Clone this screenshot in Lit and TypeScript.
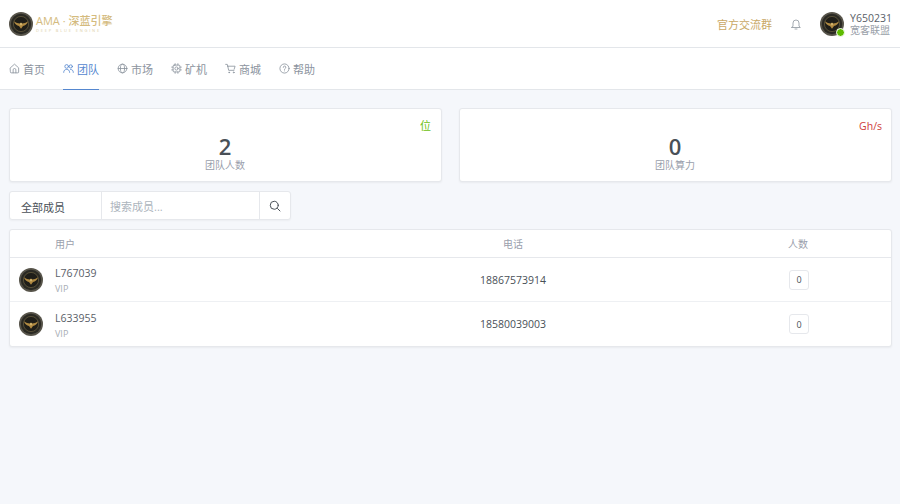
import { LitElement, html, css, svg } from "lit";
import { customElement } from "lit/decorators.js";

const avatar = (size: number) => html`<svg width=${size} height=${size} viewBox="0 0 24 24" style="display:block">
  <circle cx="12" cy="12" r="12" fill="#57544a"/>
  <circle cx="12" cy="12" r="10.200" fill="#2b2a24"/>
  <circle cx="12" cy="12" r="7.600" fill="#1f1e19" stroke="#6b6242" stroke-width=".7"/>
  <path d="M5 9.200C7 10.800 9 11.200 10.700 11.500L12 10.600l1.300.9C15 11.200 17 10.800 19 9.200 18.400 12 16 13.700 14 14.100L12 16.800 10 14.100C8 13.700 5.600 12 5 9.200Z" fill="#b08a42"/>
  <path d="M11 11.400h2l-1 2.400Z" fill="#efd995"/>
</svg>`;

const ico = (p: unknown) => html`<svg class="ico" viewBox="0 0 24 24" fill="none" stroke="currentColor" stroke-width="1.800" stroke-linecap="round" stroke-linejoin="round">${p}</svg>`;
const icons = {
  home: svg`<path d="M3 10.500 12 2.500l9 8V20a1.500 1.500 0 0 1-1.500 1.500h-15A1.500 1.500 0 0 1 3 20Z"/><path d="M9 21.500V15a3 3 0 0 1 6 0v6.500"/>`,
  team: svg`<circle cx="8" cy="7.500" r="4"/><circle cx="17" cy="7.500" r="3.500"/><path d="M1.500 20.500c0-4.500 2.800-6.500 6.500-6.500s6.500 2 6.500 6.500"/><path d="M16.500 14c3.500 0 6 2.200 6 6.500"/>`,
  globe: svg`<circle cx="12" cy="12" r="9.500"/><ellipse cx="12" cy="12" rx="4.500" ry="9.500"/><path d="M2.500 12h19"/>`,
  chip: svg`<rect x="4.500" y="4.500" width="15" height="15" rx="2.500"/><circle cx="12" cy="12" r="3.500"/><path d="M9 1.500v3M15 1.500v3M9 19.500v3M15 19.500v3M1.500 9h3M1.500 15h3M19.500 9h3M19.500 15h3"/>`,
  cart: svg`<path d="M1.500 3h3.500l1 4m0 0 2 9h11.500M6 7h16l-2 6.500"/><circle cx="9" cy="20.500" r="1"/><circle cx="19" cy="20.500" r="1"/>`,
  help: svg`<circle cx="12" cy="12" r="10"/><path d="M9.300 9.500a2.800 2.800 0 1 1 4 2.500c-1 .5-1.300 1.100-1.300 2"/><path d="M12 17.200v.1"/>`,
};

const nav = [
  ["首页", icons.home, false],
  ["团队", icons.team, true],
  ["市场", icons.globe, false],
  ["矿机", icons.chip, false],
  ["商城", icons.cart, false],
  ["帮助", icons.help, false],
] as const;

const members = [
  ["L767039", "18867573914"],
  ["L633955", "18580039003"],
];

@customElement("app-root")
export class AppRoot extends LitElement {
  static styles = css`
    :host { display: block; width: 900px; height: 504px; overflow: hidden; background: #f5f7fb; color: #495057;
      font-family: "Open Sans", "Noto Sans CJK SC", sans-serif; font-size: 11px; }
    * { box-sizing: border-box; }
    .top { height: 48px; background: #fff; border-bottom: 1px solid #e3e6ea; display: flex; align-items: center; padding: 0 8px 0 9px; }
    .logo { display: flex; align-items: center; gap: 3px; flex: 1; }
    .brand { display: flex; flex-direction: column; color: #d4bb7e; }
    .brand b { font-weight: 500; font-size: 11px; line-height: 14px; white-space: nowrap; }
    .brand i { font-style: normal; font-size: 4px; line-height: 5px; letter-spacing: 1.800px; white-space: nowrap; color: #dccfa8; }
    .group { color: #c9a866; font-size: 11px; margin-right: 18px; }
    .bell { width: 12px; height: 12px; color: #99a0a8; margin-right: 18px; display: block; }
    .user { position: relative; display: flex; align-items: center; gap: 6px; }
    .dot { position: absolute; left: 17px; top: 17px; width: 7px; height: 7px; border-radius: 50%; background: #5eba00; border: 1px solid #fff; box-sizing: content-box; margin: -1px; }
    .uname { display: flex; flex-direction: column; line-height: 12px; }
    .uname span:first-child { color: #5a6068; font-size: 10.500px; }
    .uname span:last-child { color: #99a0a8; font-size: 10px; }
    .nav { height: 42px; background: #fff; border-bottom: 1px solid #e3e6ea; display: flex; padding-left: 9px; gap: 18px; }
    .tab { display: flex; align-items: center; gap: 2px; color: #8c949e; font-size: 11px; height: 42px; border-bottom: 1px solid transparent; }
    .tab.on { color: #5587cf; border-bottom-color: #5587cf; }
    .ico { width: 11px; height: 11px; margin-right: 1px; display: block; flex: none; }
    .main { padding: 18px 9px 0; display: flex; flex-direction: column; }
    .cards { display: grid; grid-template-columns: 433px 433px; gap: 17px; margin-bottom: 9px; }
    .card { position: relative; background: #fff; border: 1px solid #e6e8ec; border-radius: 3px; box-shadow: 0 1px 2px rgba(0,0,0,.05); height: 74px; display: flex; flex-direction: column; align-items: center; padding: 25px 1px 0 0; }
    .unit { position: absolute; right: 9px; top: 10px; font-size: 11px; line-height: 14px; }
    .green { color: #6cbf10; right: 10px; } .red { color: #cf3b3a; font-size: 10.500px; }
    .num { font-size: 22px; font-weight: 600; line-height: 24px; color: #495057; }
    .label { font-size: 10px; line-height: 12px; color: #9aa0ac; margin-top: 1px; }
    .search { width: 282px; height: 29px; display: flex; background: #fff; border: 1px solid #e6e8ec; border-radius: 3px; box-shadow: 0 1px 2px rgba(0,0,0,.04); margin-bottom: 9px; }
    .search div { display: flex; align-items: center; }
    .all { width: 92px; padding: 2px 0 0 11px; color: #495057; font-size: 11px; border-right: 1px solid #e6e8ec; }
    .input { flex: 1; padding-left: 8px; color: #adb5bd; font-size: 11px; }
    .btn { width: 31px; justify-content: center; border-left: 1px solid #e6e8ec; color: #495057; }
    .btn svg { width: 12px; height: 12px; display: block; }
    .table { background: #fff; border: 1px solid #e6e8ec; border-radius: 3px; box-shadow: 0 1px 2px rgba(0,0,0,.05); width: 883px; }
    .row { display: grid; grid-template-columns: 45px 266px 384px 186px; align-items: center; }
    .row > :nth-child(3), .row > :nth-child(4) { justify-self: center; }
    .head { height: 28px; color: #9aa0ac; font-size: 10px; border-bottom: 1px solid #e6e8ec; }
    .body { height: 44px; border-bottom: 1px solid #eef0f3; }
    .body:last-child { height: 44px; border-bottom: 0; }
    .av { padding-left: 9px; }
    .name { display: flex; flex-direction: column; }
    .name span:first-child { font-size: 10.500px; line-height: 16px; color: #5a6068; padding-top: 1px; }
    .name span:last-child { font-size: 9px; line-height: 13px; color: #a8aeb6; margin-top: 1px; }
    .phone { font-size: 10.500px; color: #495057; }
    .count { width: 20px; height: 20px; margin-left: 2px; border: 1px solid #e6e8ec; border-radius: 3px; display: flex; align-items: center; justify-content: center; font-size: 9px; color: #495057; }
  `;

  render() {
    return html`
      <div class="top">
        <div class="logo">${avatar(24)}
          <div class="brand"><b>AMA · 深蓝引擎</b><i>DEEP BLUE ENGINE</i></div>
        </div>
        <span class="group">官方交流群</span>
        <svg class="bell" viewBox="0 0 24 24" fill="none" stroke="currentColor" stroke-width="1.800" stroke-linecap="round" stroke-linejoin="round"><path d="M6 16V10a6 6 0 0 1 12 0v6l2.500 3h-17Z"/><path d="M10 22h4"/></svg>
        <div class="user">${avatar(24)}<span class="dot"></span>
          <div class="uname"><span>Y650231</span><span>宽客联盟</span></div>
        </div>
      </div>
      <div class="nav">
        ${nav.map(([t, p, on]) => html`<div class="tab ${on ? "on" : ""}">${ico(p)}<span>${t}</span></div>`)}
      </div>
      <div class="main">
        <div class="cards">
          <div class="card"><span class="unit green">位</span><span class="num">2</span><span class="label">团队人数</span></div>
          <div class="card"><span class="unit red">Gh/s</span><span class="num">0</span><span class="label">团队算力</span></div>
        </div>
        <div class="search">
          <div class="all">全部成员</div>
          <div class="input">搜索成员...</div>
          <div class="btn"><svg viewBox="0 0 24 24" fill="none" stroke="currentColor" stroke-width="2" stroke-linecap="round"><circle cx="10.500" cy="10.500" r="8"/><path d="m17 17 5 5"/></svg></div>
        </div>
        <div class="table">
          <div class="row head"><span></span><span>用户</span><span>电话</span><span>人数</span></div>
          ${members.map(([n, p]) => html`<div class="row body">
            <div class="av">${avatar(24)}</div>
            <div class="name"><span>${n}</span><span>VIP</span></div>
            <span class="phone">${p}</span>
            <div class="count">0</div>
          </div>`)}
        </div>
      </div>
    `;
  }
}
